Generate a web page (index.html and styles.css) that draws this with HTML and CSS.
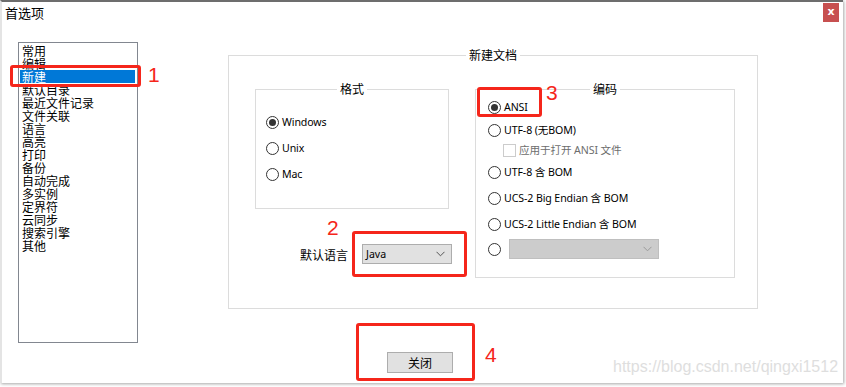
FILE: index.html
```html
<!DOCTYPE html>
<html lang="zh-CN">
<head>
<meta charset="utf-8">
<title>首选项</title>
<link rel="stylesheet" href="styles.css">
</head>
<body>
<div class="window">
  <div class="titlebar">
    <span class="title">首选项</span>
    <span class="close">x</span>
  </div>
  <div class="main">
    <ul class="list">
      <li>常用</li>
      <li>编辑</li>
      <li class="selected">新建</li>
      <li>默认目录</li>
      <li>最近文件记录</li>
      <li>文件关联</li>
      <li>语言</li>
      <li>高亮</li>
      <li>打印</li>
      <li>备份</li>
      <li>自动完成</li>
      <li>多实例</li>
      <li>定界符</li>
      <li>云同步</li>
      <li>搜索引擎</li>
      <li>其他</li>
    </ul>
    <div class="group outer">
      <div class="group-title">新建文档</div>
      <div class="cols">
        <div class="leftcol">
          <div class="group format">
            <div class="group-title">格式</div>
            <div class="radios">
              <div class="radio-row"><span class="radio checked"></span><span class="lbl">Windows</span></div>
              <div class="radio-row"><span class="radio"></span><span class="lbl">Unix</span></div>
              <div class="radio-row"><span class="radio"></span><span class="lbl">Mac</span></div>
            </div>
          </div>
          <div class="lang-row">
            <span class="lang-label">默认语言</span>
            <div class="combo"><span>Java</span><svg class="chev" width="9" height="6" viewBox="0 0 9 6"><path d="M0.5 0.8 L4.5 4.8 L8.5 0.8" fill="none" stroke="#555" stroke-width="1"/></svg></div>
          </div>
        </div>
        <div class="group encoding">
          <div class="group-title">编码</div>
          <div class="enc-row r1"><span class="radio checked"></span><span class="lbl">ANSI</span></div>
          <div class="enc-row r2"><span class="radio"></span><span class="lbl">UTF-8 (无BOM)</span></div>
          <div class="enc-row r3 check-row"><span class="checkbox"></span><span class="lbl dim">应用于打开 ANSI 文件</span></div>
          <div class="enc-row r4"><span class="radio"></span><span class="lbl">UTF-8 含 BOM</span></div>
          <div class="enc-row r5"><span class="radio"></span><span class="lbl">UCS-2 Big Endian 含 BOM</span></div>
          <div class="enc-row r6"><span class="radio"></span><span class="lbl">UCS-2 Little Endian 含 BOM</span></div>
          <div class="enc-row r7"><span class="radio"></span><div class="combo disabled"><svg class="chev" width="9" height="6" viewBox="0 0 9 6"><path d="M0.5 0.8 L4.5 4.8 L8.5 0.8" fill="none" stroke="#9a9a9a" stroke-width="1"/></svg></div></div>
        </div>
      </div>
    </div>
  </div>
  <div class="footer">
    <button class="btn">关闭</button>
  </div>

  <div class="mark box1"></div>
  <div class="mark box2"></div>
  <div class="mark box3"></div>
  <div class="mark box4"></div>
  <span class="num n1">1</span>
  <span class="num n2">2</span>
  <span class="num n3">3</span>
  <span class="num n4">4</span>
  <span class="watermark">https://blog.csdn.net/qingxi1512</span>
</div>
</body>
</html>
```

FILE: styles.css
```css
* { box-sizing: border-box; }
html, body { margin: 0; padding: 0; background: #fff; }
body {
  font-family: "Noto Sans", "Noto Sans CJK SC", sans-serif;
  font-size: 12px;
  color: #000;
  width: 846px;
  height: 387px;
  overflow: hidden;
}
.window {
  position: relative;
  width: 843px;
  height: 383px;
  background: #fff;
  border-top: 2px solid #6d6d6d;
  border-left: 2px solid #e4e4e4;
  box-shadow: 1px 1px 3px rgba(0,0,0,0.35);
}
.titlebar {
  height: 24px;
  display: flex;
  justify-content: space-between;
  align-items: flex-start;
}
.title {
  font-family: "Noto Sans CJK SC", sans-serif;
  font-size: 13px;
  line-height: 17px;
  padding: 2px 0 0 3px;
}
.close {
  width: 16px;
  height: 19px;
  margin: 1px 4px 0 0;
  background: #c75050;
  color: #fff;
  font-family: "DejaVu Sans", sans-serif;
  font-weight: bold;
  font-size: 11px;
  line-height: 17px;
  text-align: center;
}
.main {
  display: flex;
  align-items: flex-start;
  padding: 16px 0 0 16px;
}
.list {
  list-style: none;
  margin: 0;
  width: 120px;
  height: 301px;
  border: 1px solid #828790;
  padding: 1px 2px 0 1px;
  font-family: "Noto Sans CJK SC", sans-serif;
  font-size: 12px;
}
.list li {
  height: 13px;
  line-height: 13px;
  padding-left: 2px;
  white-space: nowrap;
}
.list li.selected {
  background: #0078d7;
  color: #fff;
  width: 115px;
}
.group {
  border: 1px solid #dcdcdc;
  display: flex;
  flex-direction: column;
}
.group-title {
  align-self: center;
  margin-top: -8px;
  background: #fff;
  padding: 0 3px;
  line-height: 14px;
  font-family: "Noto Sans CJK SC", sans-serif;
  font-size: 12px;
}
.outer {
  width: 530px;
  height: 254px;
  margin: 13px 0 0 90px;
}
.cols {
  display: flex;
  align-items: flex-start;
  padding-left: 26px;
  margin-top: 27px;
  gap: 23px;
}
.leftcol {
  display: flex;
  flex-direction: column;
}
.format {
  width: 194px;
  height: 120px;
}
.radios {
  margin-top: 13px;
  padding-left: 10px;
}
.radio-row {
  height: 26px;
  display: flex;
  align-items: center;
}
.radio {
  width: 13px;
  height: 13px;
  border: 1px solid #333;
  border-radius: 50%;
  background: #fff;
  flex: none;
  display: flex;
  align-items: center;
  justify-content: center;
}
.radio.checked::after {
  content: "";
  width: 7px;
  height: 7px;
  border-radius: 50%;
  background: #333;
}
.lbl {
  margin-left: 3px;
  font-family: "Noto Sans", "Noto Sans CJK SC", sans-serif;
  font-size: 10.6px;
  letter-spacing: -0.1px;
  line-height: 14px;
  white-space: nowrap;
}
.lbl.dim { color: #6d6d6d; }
.lang-row {
  display: flex;
  align-items: center;
  margin: 35px 0 0 45px;
}
.lang-label {
  font-family: "Noto Sans CJK SC", sans-serif;
  font-size: 12px;
  width: 48px;
  margin-right: 14px;
}
.combo {
  width: 90px;
  height: 20px;
  background: #e1e1e1;
  border: 1px solid #adadad;
  display: flex;
  align-items: center;
  justify-content: space-between;
  padding: 0 6px 0 3px;
  font-family: "Noto Sans", sans-serif;
  font-size: 10.6px;
}
.combo.disabled {
  width: 150px;
  background: #cccccc;
  border-color: #bfbfbf;
  justify-content: flex-end;
  margin-left: 8px;
}
.encoding {
  width: 260px;
  height: 189px;
  padding-left: 12px;
}
.encoding .group-title { margin-left: -12px; }
.enc-row {
  height: 20px;
  display: flex;
  align-items: center;
}
.r1 { margin-top: 1px; }
.r2 { margin-top: 3px; }
.r3 { margin-top: 0; }
.r4 { margin-top: 2px; }
.r5 { margin-top: 6px; }
.r6 { margin-top: 6px; }
.r7 { margin-top: 5px; }
.check-row { padding-left: 15px; }
.checkbox {
  width: 13px;
  height: 13px;
  border: 1px solid #cccccc;
  background: #fff;
  flex: none;
}
.footer {
  margin-top: 9px;
  padding-left: 385px;
}
.btn {
  width: 66px;
  height: 21px;
  background: #e1e1e1;
  border: 1px solid #adadad;
  font-family: "Noto Sans CJK SC", sans-serif;
  font-size: 12px;
  padding: 0;
  line-height: 18px;
  color: #000;
}
.mark {
  position: absolute;
  border: 3px solid #f5261b;
  border-radius: 3px;
}
.box1 { left: 8px; top: 63px; width: 131px; height: 22px; }
.box2 { left: 350px; top: 229px; width: 115px; height: 46px; }
.box3 { left: 475px; top: 85px; width: 65px; height: 30px; }
.box4 { left: 354px; top: 321px; width: 119px; height: 58px; }
.num {
  position: absolute;
  color: #f5261b;
  font-family: "Liberation Sans", sans-serif;
  font-size: 21px;
  line-height: 21px;
}
.n1 { left: 146px; top: 62px; }
.n2 { left: 325px; top: 215px; }
.n3 { left: 544px; top: 80px; }
.n4 { left: 483px; top: 342px; }
.watermark {
  position: absolute;
  left: 611px;
  top: 355px;
  font-family: "Liberation Sans", sans-serif;
  font-size: 16px;
  line-height: 20px;
  color: #dedede;
  white-space: nowrap;
}
```
